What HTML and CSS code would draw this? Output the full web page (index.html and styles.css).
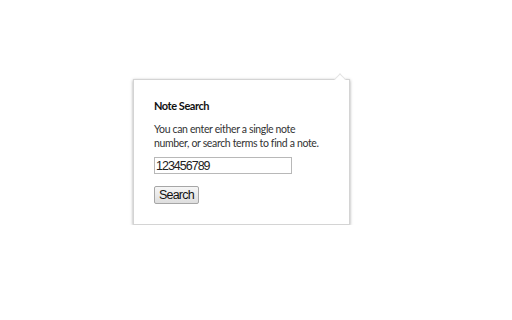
FILE: index.html
```html
<!DOCTYPE html>
<html>
<head>
<meta charset="utf-8">
<link rel="stylesheet" href="styles.css">
</head>
<body>
<div class="popup">
  <span class="arrow"></span>
  <h1 class="title">Note Search</h1>
  <p class="desc">You can enter either a single note number, or search terms to find a note.</p>
  <input class="field" type="text" value="123456789">
  <button class="btn">Search</button>
</div>
</body>
</html>
```
FILE: styles.css
```css
html, body {
  margin: 0;
  padding: 0;
  background: #ffffff;
}
.popup {
  position: relative;
  box-sizing: border-box;
  width: 217px;
  height: 146px;
  margin: 79px 0 0 133px;
  padding: 19px 20px 0 20px;
  background: #ffffff;
  border: 1px solid #d4d4d4;
  box-shadow: 0 1px 3px rgba(0, 0, 0, 0.35);
  font-family: Lato, "Open Sans", sans-serif;
  color: #333333;
  display: flex;
  flex-direction: column;
  align-items: flex-start;
}
.arrow {
  position: absolute;
  top: -5px;
  right: 5px;
  width: 7px;
  height: 7px;
  background: #ffffff;
  border-top: 1px solid #e4e4e4;
  border-left: 1px solid #e4e4e4;
  transform: rotate(45deg);
}
.title {
  margin: 0;
  font-size: 11px;
  line-height: 14px;
  font-weight: 700;
  letter-spacing: -0.45px;
  color: #111111;
}
.desc {
  margin: 9px 0 0 0;
  font-size: 10.5px;
  line-height: 14px;
  letter-spacing: -0.35px;
}
.field {
  box-sizing: border-box;
  width: 138px;
  height: 17px;
  margin: 7px 0 0 0;
  padding: 0 1px;
  border: 1px solid #b8b8b8;
  font-family: "Liberation Sans", Arial, sans-serif;
  font-size: 12.5px;
  letter-spacing: -1px;
  color: #222222;
  outline: none;
}
.btn {
  box-sizing: border-box;
  height: 18px;
  margin: 12px 0 0 0;
  padding: 0 4px;
  border: 1px solid #a6a6a6;
  border-radius: 2px;
  background: linear-gradient(#f6f6f6, #dedede);
  font-family: "Liberation Sans", Arial, sans-serif;
  font-size: 12.5px;
  letter-spacing: -0.8px;
  line-height: 15px;
  color: #111111;
}
```
